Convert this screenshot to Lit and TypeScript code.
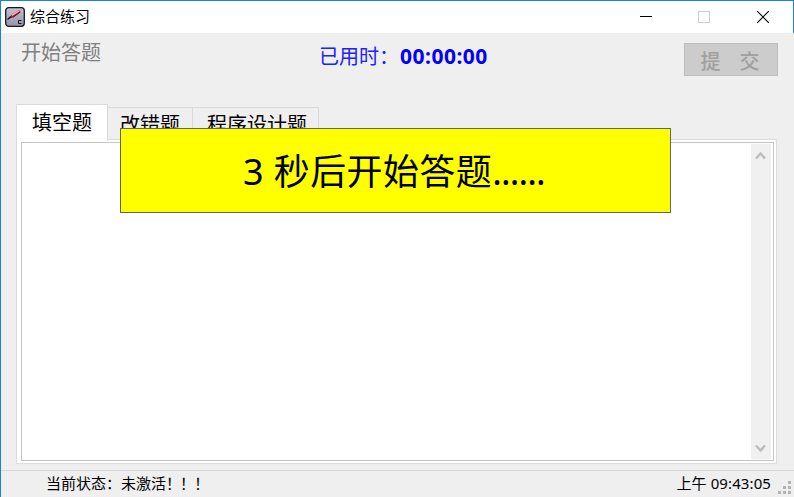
import { LitElement, html, css, svg } from "lit";
import { customElement, state } from "lit/decorators.js";

@customElement("app-root")
export class AppRoot extends LitElement {
  @state() private tabs = ["填空题", "改错题", "程序设计题"];
  @state() private active = 0;

  static styles = css`
    :host {
      display: block;
      width: 794px;
      height: 497px;
      overflow: hidden;
      font-family: "Noto Sans", "Noto Sans CJK SC", sans-serif;
      color: #000;
    }
    * { box-sizing: border-box; }
    .window {
      position: relative;
      display: flex;
      flex-direction: column;
      height: 497px;
      background: #efefef;
      border-top: 1px solid #1a82d8;
      border-left: 1px solid #1a82d8;
      white-space: nowrap;
    }
    .title {
      display: flex;
      align-items: center;
      height: 32px;
      background: #fff;
      border-right: 1px solid #1a82d8;
      padding-left: 4px;
      flex: none;
    }
    .app-icon { width: 20px; height: 20px; display: block; }
    .caption { font-size: 15px; line-height: 20px; margin: -3px 0 0 5px; flex: 1; }
    .controls { display: flex; }
    .controls svg { display: block; width: 58px; height: 32px; }
    .header {
      display: flex;
      height: 71px;
      padding: 10px 16px 0 20px;
      font-size: 20px;
      line-height: 26px;
      flex: none;
    }
    .start { color: #808080; width: 298px; margin-top: -3px; }
    .timer { color: #2020ff; width: 365px; display: flex; padding-top: 1px; }
    .timer span { width: 81px; }
    .timer b { color: #0000ff; font-size: 21px; letter-spacing: 0.5px; margin-top: -1px; }
    .submit {
      font: inherit;
      width: 94px;
      height: 33px;
      padding: 6px 0 0;
      border: 1px solid #bfbfbf;
      background: #ccc;
      color: #a0a0a0;
      line-height: 24px;
      font-weight: 500;
      display: flex;
      justify-content: center;
      align-items: flex-start;
      gap: 19px;
    }
    .submit span { margin-left: -1px; margin-right: 1px; }
    .tabs { display: flex; align-items: flex-end; height: 36px; margin-left: 15px; flex: none; }
    .tab {
      height: 33px;
      border: 1px solid #d9d9d9;
      border-left: 0;
      padding: 4px 0 0 12px;
      font-size: 20px;
      line-height: 26px;
      width: 85px;
      overflow: hidden;
    }
    .tab:last-child { width: 126px; padding-left: 14px; }
    .tab.on {
      width: 92px;
      height: 37px;
      margin-bottom: -1px;
      border-left: 1px solid #dcdcdc;
      border-bottom: 0;
      background: #fff;
      padding: 5px 0 0 15px;
      position: relative;
    }
    .panel {
      height: 325px;
      width: 761px;
      margin-left: 15px;
      margin-top: -1px;
      border: 1px solid #dcdcdc;
      background: #fff;
      padding: 2px 2px 2px 4px;
      flex: none;
    }
    .editor {
      height: 319px;
      border: 1px solid #c4c4c4;
      padding: 1px 2px;
      display: flex;
      justify-content: flex-end;
    }
    .scroll {
      width: 20px;
      background: #f0f0f0;
      display: flex;
      flex-direction: column;
      justify-content: space-between;
    }
    .scroll svg { width: 20px; height: 22px; display: block; }
    .status {
      display: flex;
      margin-top: auto;
      height: 27px;
      border-top: 1px solid #d9d9d9;
      font-size: 15px;
      line-height: 25px;
      padding-left: 45px;
      flex: none;
    }
    .state { flex: 1; }
    .bangs { letter-spacing: -0.9px; }
    .clock { letter-spacing: 0.1px; margin-right: 1px; }
    .grip { width: 22px; height: 26px; display: block; }
    .notice {
      position: absolute;
      left: 119px;
      top: 127px;
      width: 551px;
      height: 85px;
      border: 1px solid #646464;
      background: #ffff00;
      font-size: 36px;
      line-height: 48px;
      padding: 19px 0 0 122px;
    }
    .notice .words { letter-spacing: 0.4px; }
    .notice .dots { letter-spacing: -0.9px; }
  `;

  private arrow(d: string) {
    return html`<svg viewBox="0 0 20 22">${svg`<path d=${d} fill="none" stroke="#bdbdbd" stroke-width="2.4" />`}</svg>`;
  }

  render() {
    return html`
      <div class="window">
        <div class="title">
          <svg class="app-icon" viewBox="0 0 20 20">
            <defs>
              <linearGradient id="face" x1="0" y1="0" x2="0" y2="1">
                <stop offset="0" stop-color="#c4bfd0" />
                <stop offset="1" stop-color="#9692aa" />
              </linearGradient>
            </defs>
            <rect x=".7" y=".7" width="18.6" height="18.6" rx="3" fill="url(#face)" stroke="#17171c" stroke-width="1.3" />
            <path d="M4.5 11.5l2-3.6L14 3.2l1.5 1.6L8 10.4z" fill="#a32a26" />
            <path d="M7 8.4l7-4.4" stroke="#f4b4a6" stroke-width="1.3" />
            <path d="M8 10.2l7.4-5.2" stroke="#4a1014" stroke-width="1" />
            <path d="M2.5 12.6L6 9.4" stroke="#111" stroke-width="1.3" />
            <path d="M16.5 13.5h-3v3h3" fill="none" stroke="#111" />
          </svg>
          <span class="caption">综合练习</span>
          <div class="controls">
            <svg viewBox="0 0 58 32"><path d="M21 15.5h12" stroke="#000" /></svg>
            <svg viewBox="0 0 58 32"><rect x="21.5" y="10.5" width="11" height="11" fill="none" stroke="#ccc" /></svg>
            <svg viewBox="0 0 58 32"><path d="M22.2 10.2l11.6 11.6M33.8 10.2L22.2 21.8" stroke="#000" stroke-width="1.1" /></svg>
          </div>
        </div>
        <div class="header">
          <div class="start">开始答题</div>
          <div class="timer"><span>已用时：</span><b>00:00:00</b></div>
          <button class="submit" disabled><span>提</span><span>交</span></button>
        </div>
        <div class="tabs">
          ${this.tabs.map(
            (t, i) => html`<div class="tab ${i === this.active ? "on" : ""}" @click=${() => (this.active = i)}>${t}</div>`
          )}
        </div>
        <div class="panel">
          <div class="editor">
            <div class="scroll">${this.arrow("M5 14.5l4.5-5 4.5 5")}${this.arrow("M5 8.5l4.5 5 4.5-5")}</div>
          </div>
        </div>
        <div class="status">
          <span class="state">当前状态：未激活<span class="bangs">！！！</span></span>
          <span class="clock">上午 09:43:05</span>
          <svg class="grip" viewBox="0 0 22 26">
            ${[[16, 10], [11, 15], [16, 15], [6, 20], [11, 20], [16, 20]].map(
              ([x, y]) => svg`<rect x=${x} y=${y} width="3" height="3" fill="#b4b4b4" />`
            )}
          </svg>
        </div>
        <div class="notice"><span class="words">3 秒后开始答题</span><span class="dots">......</span></div>
      </div>
    `;
  }
}
